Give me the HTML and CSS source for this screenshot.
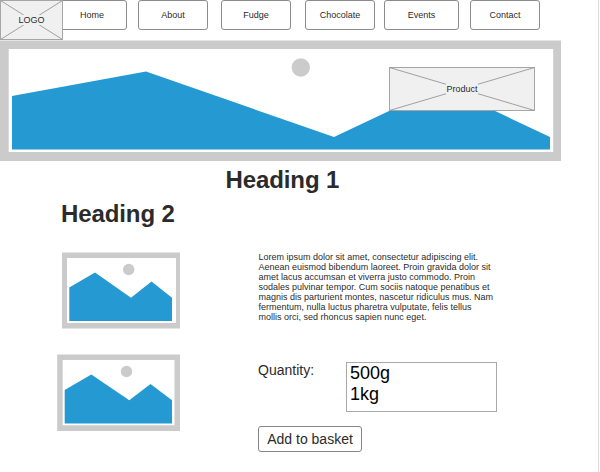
FILE: index.html
```html
<!DOCTYPE html>
<html lang="en">
<head>
<meta charset="utf-8">
<title>Product</title>
<link rel="stylesheet" href="styles.css">
</head>
<body>
<div class="page">
  <header class="header">
    <div class="logo">
      <svg class="cross" viewBox="0 0 63 40"><path class="box" d="M.5.5h62v39H.5z"/><path class="line" d="M.5.5l62 39M62.5.5l-62 39"/></svg>
      <span class="tag">LOGO</span>
    </div>
    <nav class="nav">
      <a class="item home">Home</a>
      <a class="item about">About</a>
      <a class="item fudge">Fudge</a>
      <a class="item chocolate">Chocolate</a>
      <a class="item events">Events</a>
      <a class="item contact">Contact</a>
    </nav>
  </header>
  <section class="banner">
    <svg class="scene" viewBox="0 0 561 121">
      <path class="frame" d="M0 .5h561V121H0z"/>
      <path class="paper" d="M8.7 9h544.5v103H8.7z"/>
      <circle class="frame" cx="300.8" cy="27.5" r="9.2"/>
      <path class="hills" d="M12 56L146 31.5 334 97 442 46 550 97V109.5H12z"/>
    </svg>
    <div class="product">
      <svg class="cross" viewBox="0 0 146 44"><path class="box" d="M.5.5h145v43H.5z"/><path class="line" d="M.5.5l145 43M145.5.5L.5 43.5"/></svg>
      <span class="tag">Product</span>
    </div>
  </section>
  <h1 class="title">Heading 1</h1>
  <h2 class="subtitle">Heading 2</h2>
  <main class="content">
    <div class="gallery">
      <svg class="thumb first" viewBox="0 0 118 77">
        <path class="frame" d="M0 .5h118v76H0z"/><path class="paper" d="M5 6h109v65H5z"/>
        <circle class="frame" cx="66.7" cy="17.5" r="5.7"/>
        <path class="hills" d="M7.3 35.5L33 20.5 69 45.8 89.5 29.5 110 45.8V69H7.3z"/>
      </svg>
      <svg class="thumb" viewBox="0 0 123 77">
        <path class="frame" d="M.2.5H123V77H.2z"/><path class="paper" d="M5.7 6h111.8v65.3H5.7z"/>
        <circle class="frame" cx="69.5" cy="17.5" r="5.7"/>
        <path class="hills" d="M7.7 36L34.3 20.5 72.3 46.3 93.5 30 115 46.3V69.5H7.7z"/>
      </svg>
    </div>
    <div class="details">
      <p class="copy">Lorem ipsum dolor sit amet, consectetur adipiscing elit.<br>Aenean euismod bibendum laoreet. Proin gravida dolor sit<br>amet lacus accumsan et viverra justo commodo. Proin<br>sodales pulvinar tempor. Cum sociis natoque penatibus et<br>magnis dis parturient montes, nascetur ridiculus mus. Nam<br>fermentum, nulla luctus pharetra vulputate, felis tellus<br>mollis orci, sed rhoncus sapien nunc eget.</p>
      <div class="quantity">
        <span class="label">Quantity:</span>
        <div class="list"><div>500g</div><div>1kg</div></div>
      </div>
      <button class="basket">Add to basket</button>
    </div>
  </main>
</div>
</body>
</html>
```
FILE: styles.css
```css
* { box-sizing: border-box; }
body { margin: 0; background: #fff; color: #2b2b2b; font-family: "Liberation Sans", Arial, sans-serif; overflow: hidden; }
svg { display: block; }
.page { width: 599px; height: 472px; border-right: 1px solid #dedede; }
.header { display: flex; height: 40px; }
.logo { position: relative; z-index: 1; width: 63px; height: 40px; display: grid; place-items: center; font-size: 9px; }
.cross { grid-area: 1 / 1; width: 100%; height: 100%; }
.tag { grid-area: 1 / 1; z-index: 1; line-height: 10px; background: #f0f0f0; }
.box { fill: #f0f0f0; stroke: #a6a6a6; }
.line { fill: none; stroke: #8c8c8c; stroke-width: .8; }
.nav { display: flex; margin-left: -6px; }
.item { width: 70px; height: 30px; border: 1px solid #8c8c8c; border-radius: 3px; font-size: 9px; line-height: 28px; text-align: center; }
.about { margin-left: 11px; }
.fudge { margin-left: 13px; }
.chocolate { margin-left: 14px; }
.events { width: 75px; margin-left: 9px; }
.contact { margin-left: 11px; }
.banner { display: grid; width: 561px; height: 121px; }
.scene { grid-area: 1 / 1; width: 561px; height: 121px; }
.frame { fill: #cbcbcb; }
.paper { fill: #fff; }
.hills { fill: #2499d2; }
.product { grid-area: 1 / 1; width: 146px; height: 44px; margin: 27px 0 0 389px; display: grid; place-items: center; font-size: 9px; }
.title, .subtitle { margin: 0; font-size: 24px; line-height: 28px; font-weight: bold; letter-spacing: -.1px; }
.title { padding: 5px 0 0 225.5px; }
.subtitle { padding: 6px 0 0 61px; }
.content { display: flex; padding-top: 24px; }
.gallery { display: flex; flex-direction: column; align-items: flex-end; gap: 25px; width: 180px; }
.first { width: 118px; height: 77px; }
.thumb:last-child { width: 123px; height: 77px; }
.details { margin-left: 78px; }
.copy { margin: 0; padding-left: .4px; font-size: 9px; line-height: 10px; letter-spacing: .01px; white-space: nowrap; }
.quantity { display: flex; margin-top: 40px; }
.label { width: 88px; font-size: 14px; line-height: 17px; }
.list { width: 151px; height: 50px; border: 1px solid #a9a9a9; padding: 0 3px; font-size: 18px; line-height: 21px; color: #000; }
.basket { display: block; width: 104px; height: 26px; margin-top: 14px; padding: 0; border: 1px solid #858585; border-radius: 3px; background: #fff; color: #2b2b2b; font: 14px "Liberation Sans", Arial, sans-serif; }
```
